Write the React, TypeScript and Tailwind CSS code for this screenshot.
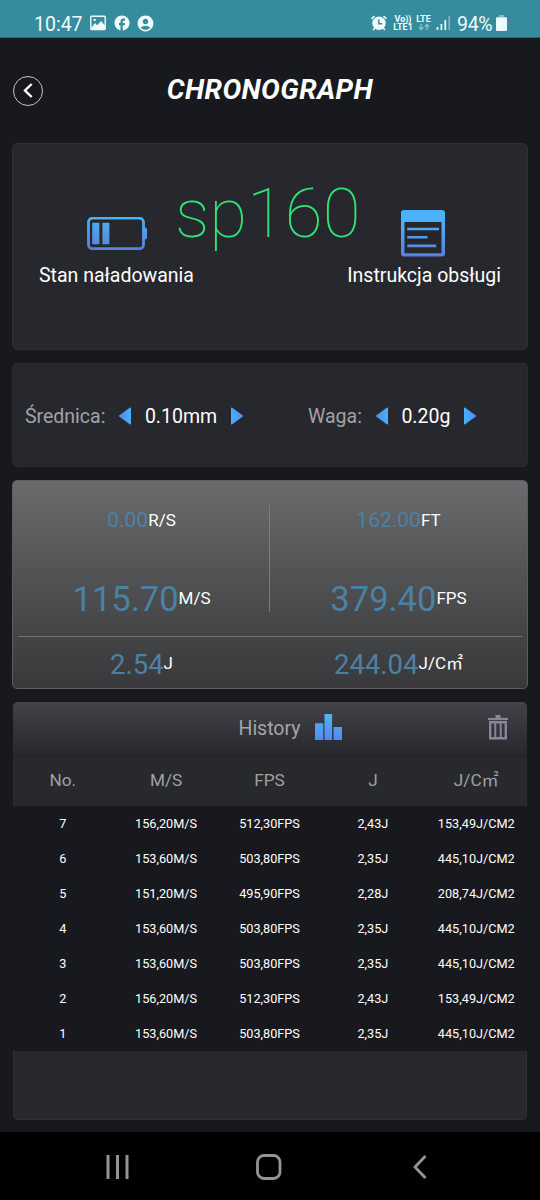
import type { ReactNode } from "react";
import { MdFacebook, MdAccountCircle } from "react-icons/md";

const columns = ["No.", "M/S", "FPS", "J", "J/C㎡"];

const history = [
  ["7", "156,20M/S", "512,30FPS", "2,43J", "153,49J/CM2"],
  ["6", "153,60M/S", "503,80FPS", "2,35J", "445,10J/CM2"],
  ["5", "151,20M/S", "495,90FPS", "2,28J", "208,74J/CM2"],
  ["4", "153,60M/S", "503,80FPS", "2,35J", "445,10J/CM2"],
  ["3", "153,60M/S", "503,80FPS", "2,35J", "445,10J/CM2"],
  ["2", "156,20M/S", "512,30FPS", "2,43J", "153,49J/CM2"],
  ["1", "153,60M/S", "503,80FPS", "2,35J", "445,10J/CM2"],
];

function StatusBar() {
  return (
    <header className="flex h-[38px] items-center border-b border-[#2c6572] bg-[#358c9f] pr-[33px] pl-[34px] pt-[9px] text-[#f0fbfd]">
      <span className="w-[56px] pt-[3px] text-[19.5px] leading-7">10:47</span>
      <svg width="16" height="16" viewBox="0 0 16 16" fill="none">
        <rect x="0.8" y="1.3" width="14.4" height="13.2" rx="0.8" stroke="currentColor" strokeWidth="1.4" />
        <path d="M1.5 12.5 5 8l2.2 2.3L11 6l4 4.5v3.7H1.5z" fill="currentColor" />
        <circle cx="4.6" cy="4.9" r="1.2" fill="currentColor" />
      </svg>
      <MdFacebook className="ml-[7px] size-[18px]" />
      <MdAccountCircle className="ml-[5px] size-[19px]" />

      <div className="ml-auto flex items-center">
        <svg width="18" height="16" viewBox="0 0 18 16" fill="none">
          <circle cx="9" cy="8.2" r="6.7" fill="currentColor" />
          <path d="M1.5 3.8 4.5 1M16.5 3.8 13.5 1M4.8 13l-1.7 2M13.2 13l1.7 2" stroke="currentColor" strokeWidth="1.7" />
          <path d="M8.8 4.5v4.2h3.4" stroke="#358c9f" strokeWidth="1.5" />
        </svg>
        <div className="ml-[5px] flex w-[20px] flex-col items-center text-[9px] leading-[8px] font-bold whitespace-nowrap">
          <span>Vo))</span>
          <span>LTE1</span>
        </div>
        <div className="ml-[3px] flex w-[15px] flex-col items-center text-[9px] leading-[8px] font-bold">
          <span>LTE</span>
          <svg width="12" height="8" viewBox="0 0 12 8" fill="none" stroke="#8fc3ce" strokeWidth="1.3">
            <path d="M3.2 1v5.5M1 4.3l2.2 2.3 2.2-2.3M9 7V1.5M6.8 3.7 9 1.4l2.2 2.3" />
          </svg>
        </div>
        <svg className="ml-[5px]" width="15" height="16" viewBox="0 0 15 16" fill="none" strokeWidth="1.7">
          <path d="M1.5 12v3M5.4 9v6M9.3 5v10" stroke="currentColor" />
          <path d="M13.2 1v14" stroke="#80b7c3" />
        </svg>
        <span className="ml-[6px] w-[39px] pt-[3px] text-[19.5px] leading-7 tracking-[-0.3px]">94%</span>
        <svg width="11" height="16" viewBox="0 0 11 16">
          <path d="M3 0h5v2h2a1 1 0 0 1 1 1H0a1 1 0 0 1 1-1h2z" fill="#86bdc8" />
          <rect y="2.5" width="11" height="13.5" rx="1" fill="currentColor" />
        </svg>
      </div>
    </header>
  );
}

function BatteryIcon() {
  return (
    <svg width="60" height="34" viewBox="0 0 60 34" fill="none">
      <defs>
        <linearGradient id="battery" x1="0" y1="0" x2="0" y2="34" gradientUnits="userSpaceOnUse">
          <stop stopColor="#4cb2ef" />
          <stop offset="1" stopColor="#5b7edb" />
        </linearGradient>
      </defs>
      <rect x="1.5" y="1.2" width="55" height="30.5" rx="4" stroke="url(#battery)" strokeWidth="2.8" />
      <path d="M57 10.5h1a2 2 0 0 1 2 2v8a2 2 0 0 1-2 2h-1z" fill="url(#battery)" />
      <path d="M5.2 5.7h7.2v21.5H5.2zM15.4 5.7h7v21.5h-7z" fill="url(#battery)" />
    </svg>
  );
}

function ManualIcon() {
  return (
    <svg width="44" height="47" viewBox="0 0 44 47">
      <defs>
        <linearGradient id="manual" x1="0" y1="10" x2="0" y2="47" gradientUnits="userSpaceOnUse">
          <stop stopColor="#4bb3fc" />
          <stop offset="1" stopColor="#5b7edb" />
        </linearGradient>
      </defs>
      <rect width="44" height="46.5" rx="3" fill="url(#manual)" />
      <path d="M3.5 12h37v31.3h-37z" fill="#26272d" />
      <path d="M6.2 17.7H38v2.6H6.2zM6.2 26h20.3v2.6H6.2zM6.2 34.6h29v2.6h-29z" fill="url(#manual)" />
    </svg>
  );
}

function Arrow({ flip }: { flip?: boolean }) {
  return (
    <svg width="12" height="18" viewBox="0 0 12 18" className={flip ? "rotate-180" : ""}>
      <defs>
        <linearGradient id="arrow" x1="0" y1="0" x2="12" y2="0" gradientUnits="userSpaceOnUse">
          <stop stopColor="#4c8df5" />
          <stop offset="1" stopColor="#4bb0fb" />
        </linearGradient>
      </defs>
      <path d="M.4 8.3 10.8.8q1.2-.7 1.2.7v15q0 1.4-1.2.7L.4 9.7q-.8-.7 0-1.4z" fill="url(#arrow)" />
    </svg>
  );
}

function Stepper({ label, value }: { label: string; value: string }) {
  return (
    <div className="flex items-center text-[19.5px] leading-7">
      <span className="mr-[14px] pt-[3px] text-[#a2a2a6]">{label}</span>
      <Arrow />
      <span className="mx-[13.5px] pt-[3px] text-white">{value}</span>
      <Arrow flip />
    </div>
  );
}

function Reading({ unit, children }: { unit: string; children: ReactNode }) {
  return (
    <div className="flex items-center justify-center text-[#4b81a5]">
      {children}
      <span className="text-[17px] leading-5 text-white">{unit}</span>
    </div>
  );
}

export default function App() {
  return (
    <div className="flex h-[1200px] w-[540px] flex-col overflow-hidden bg-[#18191e] font-[Roboto,'Noto_Sans_CJK_JP',sans-serif]">
      <StatusBar />

      {/* Title */}
      <div className="grid h-[105px] grid-cols-[1fr_auto_1fr] items-center pl-[13px]">
        <button className="flex size-[30px] items-center justify-center rounded-full border-[1.5px] border-[#c5c5c7]">
          <svg width="10" height="15" viewBox="0 0 10 15" fill="none" stroke="white" strokeWidth="2.4">
            <path d="M8.7 1 2 7.5 8.7 14" />
          </svg>
        </button>
        <h1 className="-ml-[13px] pb-[2px] text-[28px] leading-8 font-bold tracking-[0.4px] text-white italic">CHRONOGRAPH</h1>
      </div>

      <main className="flex flex-col gap-[13px] px-[12px]">
        {/* Device */}
        <section className="h-[207px] rounded-[5px] border border-[#2e2f34] bg-[#27282d] pt-[32px]">
          <div className="flex h-[85px] pl-[74px]">
            <div className="w-[88px] pt-[41px]">
              <BatteryIcon />
            </div>
            <span className="w-[226px] text-[69px] leading-[76px] font-thin text-[#2ee676]">sp160</span>
            <div className="pt-[34px]">
              <ManualIcon />
            </div>
          </div>
          <div className="flex justify-between px-[26px] text-[19.5px] leading-[30px] text-white">
            <span>Stan naładowania</span>
            <span>Instrukcja obsługi</span>
          </div>
        </section>

        {/* Settings */}
        <section className="flex h-[104px] items-center rounded-[5px] border border-[#2b2c31] bg-[#27282d] pt-px pl-[12px]">
          <div className="w-[283px]">
            <Stepper label="Średnica:" value="0.10mm" />
          </div>
          <Stepper label="Waga:" value="0.20g" />
        </section>

        {/* Current shot */}
        <section className="flex h-[209px] flex-col rounded-[5px] border border-[#5c5d5f] bg-linear-to-b from-[#6a6b6d] via-[#4f5051] to-[#39393b]">
          <div className="grid h-[155px] grid-cols-2">
            <div className="flex flex-col pt-[24px]">
              <Reading unit="R/S">
                <span className="pt-[1px] text-[21px] leading-7">0.00</span>
              </Reading>
              <div className="h-[42px]" />
              <Reading unit="M/S">
                <span className="pt-[3px] text-[34.5px] leading-[40px]">115.70</span>
              </Reading>
            </div>
            <div className="relative flex flex-col pt-[24px]">
              <div className="absolute top-[24px] -left-px h-[107px] w-px bg-[#7b7c7e]" />
              <Reading unit="FT">
                <span className="pt-[1px] text-[21px] leading-7">162.00</span>
              </Reading>
              <div className="h-[42px]" />
              <Reading unit="FPS">
                <span className="pt-[3px] text-[34.5px] leading-[40px]">379.40</span>
              </Reading>
            </div>
          </div>
          <div className="mx-[5px] h-px bg-[#707173]" />
          <div className="grid flex-1 grid-cols-2 pt-px">
            <Reading unit="J">
              <span className="pt-[3px] text-[27.5px] leading-8">2.54</span>
            </Reading>
            <Reading unit="J/C㎡">
              <span className="pt-[3px] text-[27.5px] leading-8">244.04</span>
            </Reading>
          </div>
        </section>

        {/* History */}
        <section className="mx-[1px] flex h-[418px] flex-col">
          <div className="grid h-[54px] grid-cols-[1fr_auto_1fr] items-center rounded-t-[5px] border-t border-[#47474d] bg-linear-to-b from-[#424248] to-[#27282c] pr-[19px] pb-[5px] pl-[59px]">
            <span />
            <div className="flex items-center gap-[14px]">
              <span className="pt-[3px] text-[19.5px] leading-7 text-[#a5a5a9]">History</span>
              <svg width="27" height="26" viewBox="0 0 27 26">
                <defs>
                  <linearGradient id="bars" x1="0" y1="0" x2="0" y2="26" gradientUnits="userSpaceOnUse">
                    <stop stopColor="#4bb7fc" />
                    <stop offset="1" stopColor="#5588ec" />
                  </linearGradient>
                </defs>
                <path d="M0 9.3h8.3V26H0zM9.5 0h7.6v26H9.5zM18.5 13H27v13h-8.5z" fill="url(#bars)" />
              </svg>
            </div>
            <svg className="justify-self-end" width="20" height="25" viewBox="0 0 20 25" fill="none" stroke="#85869a">
              <path d="M0 4h20" strokeWidth="2.2" />
              <path d="M7.5 1.5h5" strokeWidth="3" />
              <path d="M2.2 7.2h15.6v16H2.2z" strokeWidth="2.4" />
              <path d="M7.3 7v16M12.7 7v16" strokeWidth="2" />
            </svg>
          </div>
          <div className="h-[50px] border-t border-[#222328] bg-[#28292d]">
            <div className="-mr-[1px] -ml-[2px] grid grid-cols-5 pt-[9px] text-center text-[17.2px] leading-7 text-[#a0a0a4]">
              {columns.map((name) => (
                <span key={name}>{name}</span>
              ))}
            </div>
          </div>
          <div className="-mr-[1px] -ml-[2px]">
            {history.map((row) => (
              <div key={row[0]} className="grid h-[35px] grid-cols-5 items-center pt-[1px] text-center text-[12.7px] leading-5 text-white">
                {row.map((cell, i) => (
                  <span key={i}>{cell}</span>
                ))}
              </div>
            ))}
          </div>
          <div className="flex-1 rounded-b-[5px] border border-t-0 border-[#303136] bg-[#28292d]" />
        </section>
      </main>

      {/* Android navigation */}
      <nav className="mt-auto flex h-[68px] items-center bg-black pt-[2px] pl-[106px]">
        <svg width="23" height="24" viewBox="0 0 23 24" stroke="#949494" strokeWidth="3">
          <path d="M2 0v24M11.5 0v24M21 0v24" />
        </svg>
        <svg className="ml-[127px]" width="26" height="26" viewBox="0 0 26 26" fill="none" stroke="#949494" strokeWidth="2.8">
          <rect x="1.5" y="1.5" width="22.5" height="23" rx="6.5" />
        </svg>
        <svg className="ml-[131px]" width="14" height="24" viewBox="0 0 14 24" fill="none" stroke="#949494" strokeWidth="2.8">
          <path d="M12.5 1 2 12l10.5 11" />
        </svg>
      </nav>
    </div>
  );
}
